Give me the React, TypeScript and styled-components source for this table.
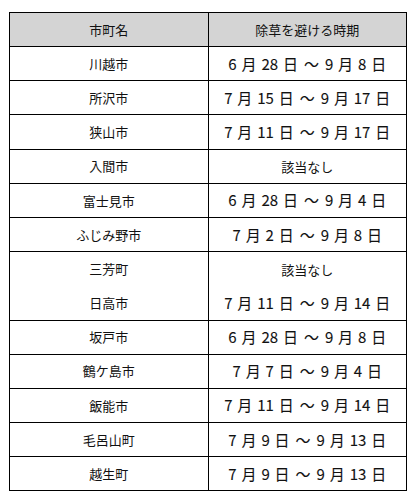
import React from 'react';
import styled, {createGlobalStyle} from 'styled-components';

type Row = {
  city: string;
  from?: string;
  to?: string;
  joined?: boolean;
};

const rows: Row[] = [
  {city: '川越市', from: '6 月 28 日', to: '9 月 8 日'},
  {city: '所沢市', from: '7 月 15 日', to: '9 月 17 日'},
  {city: '狭山市', from: '7 月 11 日', to: '9 月 17 日'},
  {city: '入間市'},
  {city: '富士見市', from: '6 月 28 日', to: '9 月 4 日'},
  {city: 'ふじみ野市', from: '7 月 2 日', to: '9 月 8 日'},
  {city: '三芳町'},
  {city: '日高市', from: '7 月 11 日', to: '9 月 14 日', joined: true},
  {city: '坂戸市', from: '6 月 28 日', to: '9 月 8 日'},
  {city: '鶴ケ島市', from: '7 月 7 日', to: '9 月 4 日'},
  {city: '飯能市', from: '7 月 11 日', to: '9 月 14 日'},
  {city: '毛呂山町', from: '7 月 9 日', to: '9 月 13 日'},
  {city: '越生町', from: '7 月 9 日', to: '9 月 13 日'},
];

const GlobalStyle = createGlobalStyle`
  html, body {
    margin: 0;
    padding: 0;
    background: #ffffff;
  }
  body {
    font-family: "Noto Sans CJK JP", "Noto Sans", sans-serif;
    color: #111111;
    line-height: 1.2;
  }
`;

const Page = styled.div`
  padding: 12px 10px 12px 9px;
`;

const Table = styled.table`
  width: 100%;
  border-collapse: collapse;
  table-layout: fixed;
  border: 1.5px solid #000;
`;

const HeadRow = styled.tr`
  height: 34px;
`;

const HeadCell = styled.th`
  padding: 0;
  background: #d4d4d4;
  border: 1.5px solid #000;
  font-size: 13px;
  font-weight: 400;
  text-align: center;
  vertical-align: middle;
`;

const BodyRow = styled.tr<{$joined?: boolean}>`
  height: 34.2px;

  & > td {
    border-top: ${p => (p.$joined ? 'none' : '1.5px solid #000')};
  }
`;

const CityCell = styled.td`
  padding: 0;
  border-left: 1.5px solid #000;
  border-right: 1.5px solid #000;
  font-size: 13px;
  text-align: center;
  vertical-align: middle;
`;

const PeriodCell = styled(CityCell)`
  font-size: 15px;
  font-weight: 400;
  word-spacing: 1.5px;
`;

const DateText = styled.span`
  -webkit-text-stroke: 0.1px #111;
`;

const NoneText = styled.span`
  font-size: 13px;
`;

const Tilde = styled.span`
  display: inline-block;
  margin: 0 6px;
`;

export default function App() {
  return (
    <>
      <GlobalStyle />
      <Page>
        <Table>
          <thead>
            <HeadRow>
              <HeadCell>市町名</HeadCell>
              <HeadCell>除草を避ける時期</HeadCell>
            </HeadRow>
          </thead>
          <tbody>
            {rows.map(r => (
              <BodyRow key={r.city} $joined={r.joined}>
                <CityCell>{r.city}</CityCell>
                <PeriodCell>
                  {r.from ? (
                    <DateText>
                      {r.from}
                      <Tilde>～</Tilde>
                      {r.to}
                    </DateText>
                  ) : (
                    <NoneText>該当なし</NoneText>
                  )}
                </PeriodCell>
              </BodyRow>
            ))}
          </tbody>
        </Table>
      </Page>
    </>
  );
}
